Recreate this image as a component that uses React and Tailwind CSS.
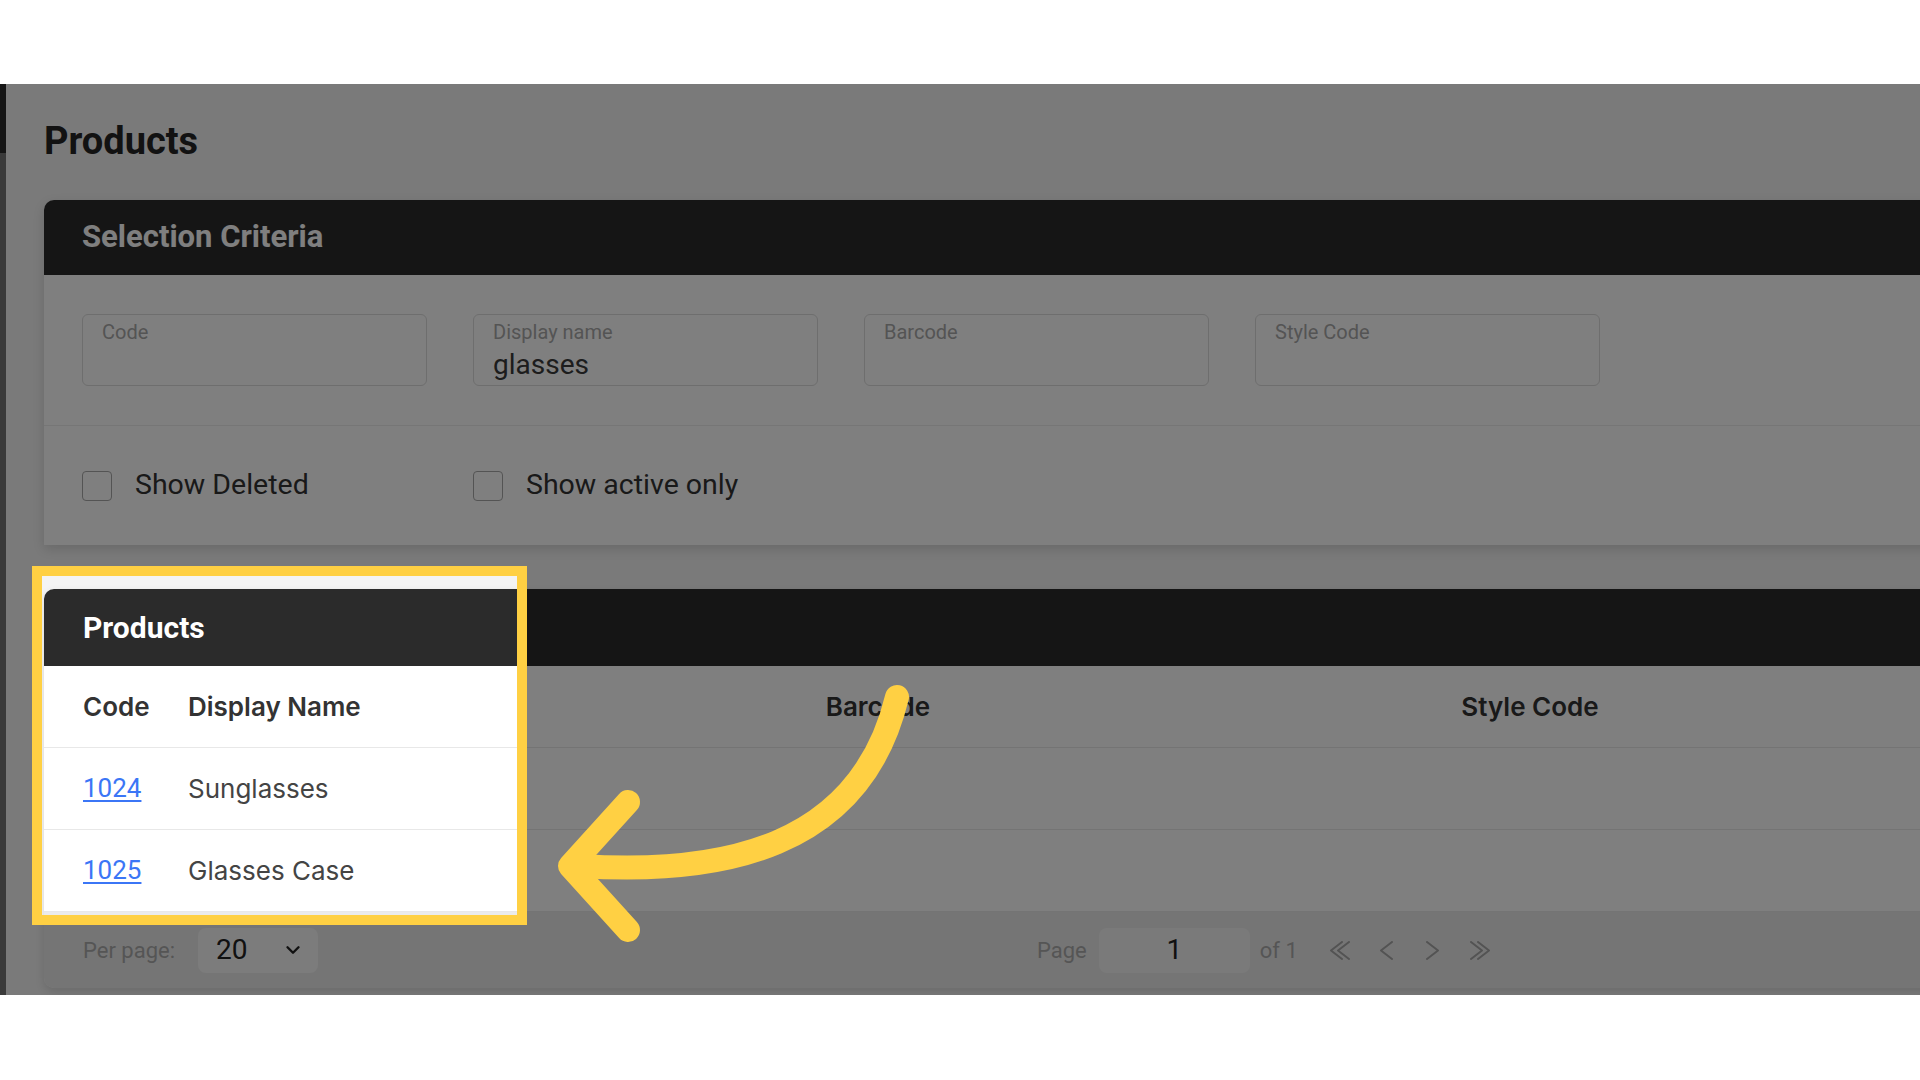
import React from "react";
import { ChevronDown } from "lucide-react";

const FIELDS = [
  { label: "Code", value: "" },
  { label: "Display name", value: "glasses" },
  { label: "Barcode", value: "" },
  { label: "Style Code", value: "" },
];

const ROWS = [
  { code: "1024", name: "Sunglasses" },
  { code: "1025", name: "Glasses Case" },
];

// column widths shared by the table header and body
const cols = "grid grid-cols-[105px_432px_516px_788px] pl-[39px]";

const TextField = ({ label, value }) => (
  <div className="h-[72px] w-[345px] rounded-[6px] border border-[#dcdcdc] bg-white px-[19px] pt-[5px]">
    <div className="text-[20px] leading-[24px] text-[#a9a9a9]">{label}</div>
    {value && (
      <div className="mt-[5px] text-[28px] leading-[32px] text-[#3a3a3a]">{value}</div>
    )}
  </div>
);

const Checkbox = ({ label }) => (
  <label className="flex w-[345px] items-center gap-[23px]">
    <span className="h-[30px] w-[30px] rounded-[4px] border-[1.5px] border-[#a8a8a8] bg-white" />
    <span className="text-[28.5px] text-[#333333]">{label}</span>
  </label>
);

const Chevron = ({ dir = "left", double = false }) => {
  const flip = dir === "right";
  const w = double ? 22 : 15;
  const one = (x) => (flip ? `M${x} 1 L${x + 11} 9.5 L${x} 18` : `M${x + 11} 1 L${x} 9.5 L${x + 11} 18`);
  return (
    <svg width={w} height="19" viewBox={`0 0 ${w} 19`} fill="none" stroke="#a6a6a6" strokeWidth="2" strokeLinecap="round" strokeLinejoin="round">
      {double ? (
        <>
          <path d={one(2)} />
          <path d={one(9)} />
        </>
      ) : (
        <path d={one(2)} />
      )}
    </svg>
  );
};

const SelectionCriteria = () => (
  <section className="w-[1960px] rounded-tl-[10px] bg-white shadow-[0_4px_12px_rgba(0,0,0,0.14)]">
    <div className="flex h-[75px] items-center rounded-tl-[10px] bg-[#2b2b2b] pl-[38px]">
      <h2 className="text-[31px] font-bold text-white">Selection Criteria</h2>
    </div>
    <div className="flex gap-[46px] border-b border-[#ececec] px-[38px] pb-[39px] pt-[39px]">
      {FIELDS.map((f) => (
        <TextField key={f.label} label={f.label} value={f.value} />
      ))}
    </div>
    <div className="flex h-[119px] items-center gap-[46px] px-[38px]">
      <Checkbox label="Show Deleted" />
      <Checkbox label="Show active only" />
    </div>
  </section>
);

const ProductsTable = () => (
  <section className="mt-[44px] w-[1960px] rounded-t-[10px] rounded-bl-[10px] bg-white shadow-[0_4px_10px_rgba(0,0,0,0.12)]">
    <div className="flex h-[77px] items-center rounded-tl-[10px] bg-[#2b2b2b] pl-[39px]">
      <h2 className="text-[30px] font-bold text-white">Products</h2>
    </div>
    <div className={`${cols} h-[82px] items-center border-b border-[#e8e8e8] font-['Inter',sans-serif] text-[26px] font-semibold text-[#333333]`}>
      <span>Code</span>
      <span>Display Name</span>
      <span className="text-center">Barcode</span>
      <span className="text-center">Style Code</span>
    </div>
    {ROWS.map((r) => (
      <div key={r.code} className={`${cols} h-[82px] items-center border-b border-[#e8e8e8] font-['Inter',sans-serif] text-[26px] text-[#444444]`}>
        <a href="#" className="font-['Roboto',sans-serif] text-[#3b76f6] underline underline-offset-[3px]">
          {r.code}
        </a>
        <span>{r.name}</span>
        <span />
        <span />
      </div>
    ))}
    <div className="flex h-[76px] items-center rounded-bl-[10px] bg-[#ebebeb] pl-[39px]">
      <span className="text-[22px] text-[#ababab]">Per page:</span>
      <div className="ml-[23px] flex h-[45px] w-[120px] items-center justify-between rounded-[8px] bg-[#f8f8f8] pl-[18px] pr-[14px]">
        <span className="text-[28px] text-[#222222]">20</span>
        <ChevronDown size={22} strokeWidth={2.6} color="#222222" />
      </div>
      <div className="ml-[719px] flex items-center text-[22px] text-[#ababab]">
        <span>Page</span>
        <div className="ml-[12px] flex h-[45px] w-[151px] items-center justify-center rounded-[8px] bg-[#f5f5f5] text-[28px] text-[#222222]">
          1
        </div>
        <span className="ml-[10px]">of 1</span>
        <span className="ml-[31px] flex"><Chevron double /></span>
        <span className="ml-[28px] flex"><Chevron /></span>
        <span className="ml-[31px] flex"><Chevron dir="right" /></span>
        <span className="ml-[29px] flex"><Chevron dir="right" double /></span>
      </div>
    </div>
  </section>
);

export default function App() {
  return (
    <div className="h-[1080px] w-[1920px] overflow-hidden bg-white pt-[84px] font-['Roboto','Liberation_Sans',sans-serif]">
      <div className="relative flex h-[911px] overflow-hidden bg-[#f4f4f4]">
        {/* sliver of the sidebar */}
        <div className="flex w-[6px] shrink-0 flex-col">
          <div className="h-[69px] bg-[#2b2b2b]" />
          <div className="flex-1 bg-[#757575]" />
        </div>

        <main className="shrink-0 pl-[38px] pt-[34px]">
          <h1 className="text-[38px] font-bold leading-[46px] text-[#242424]">Products</h1>
          <div className="mt-[36px]">
            <SelectionCriteria />
            <ProductsTable />
          </div>
        </main>

        {/* highlight frame, dims everything around it */}
        <div className="pointer-events-none absolute left-[42px] top-[492px] h-[339px] w-[475px] shadow-[0_0_0_10px_#ffd043,0_0_0_9999px_rgba(0,0,0,0.5)]" />

        <svg className="pointer-events-none absolute left-0 top-0" width="1920" height="911" viewBox="0 0 1920 911" fill="none">
          <g stroke="#ffd043" strokeWidth="24" strokeLinecap="round" strokeLinejoin="round">
            <path d="M897 613 C860 766 720 791 580 782" />
            <path d="M628 718 L570 782 L628 846" />
          </g>
        </svg>
      </div>
    </div>
  );
}
